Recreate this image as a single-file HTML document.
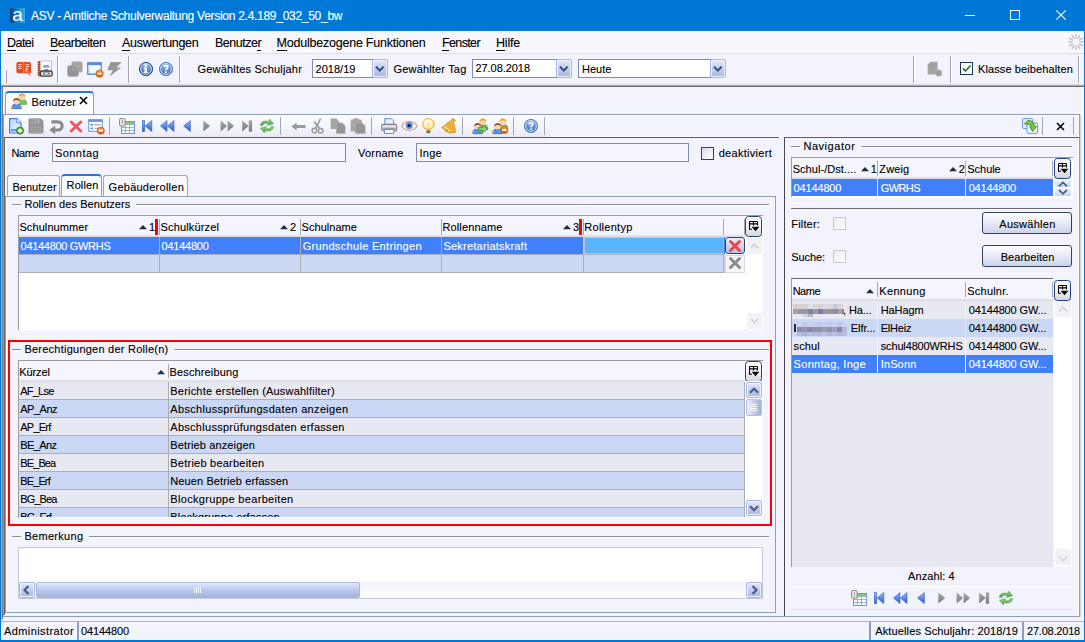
<!DOCTYPE html>
<html lang="de"><head><meta charset="utf-8"><title>ASV - Amtliche Schulverwaltung</title>
<style>
html,body{margin:0;padding:0}
body{width:1085px;height:642px;position:relative;overflow:hidden;background:#F2F3FD;font-family:"Liberation Sans",sans-serif;font-size:11px;color:#000;-webkit-text-stroke:0.12px #000}
.a{position:absolute;box-sizing:border-box}
.t{white-space:nowrap;line-height:16px;height:16px}
.w{color:#fff;-webkit-text-stroke:0.12px #fff}
.m{}
.m u{text-decoration:none;border-bottom:1px solid #000;padding-bottom:0}
.inp{background:#fff;border:1px solid #7A8DB5}
.ro{background:#F5F6FE}
.hs{background:linear-gradient(#F4F5FD,#D4D4DC)}
.btn{border:1px solid #33415F;border-radius:3px;background:linear-gradient(#FDFDFF 0%,#E9ECF8 45%,#CDD3EA 100%);text-align:center}
.dd{border:1px solid #A8B8DC;border-radius:2px;background:linear-gradient(#E4EAFC,#C4D0F4 45%,#A8B8E4);box-shadow:inset 0 0 0 1px #EEF2FF}
.cb{background:linear-gradient(135deg,#DCDCE4,#FFFFFF);border:1px solid #33415F}
.cbd{background:linear-gradient(135deg,#ECECF0,#FFFFFF);border:1px solid #C8C8D0}
.hdr{background:#F4F5FD}
svg{position:absolute;overflow:visible}
</style></head>
<body>
<div class="a" style="left:0px;top:0px;width:1085px;height:31px;background:#0078D7"></div>
<div class="a" style="left:10px;top:8px;width:15px;height:15px;background:linear-gradient(90deg,#0A3C78,#1C8DDC 60%,#3AA8E8)"></div>
<svg class="a" style="left:10px;top:8px" width="15" height="15"><text x="7.6" y="12.8" text-anchor="middle" font-size="19" fill="#fff" font-family="Liberation Sans, sans-serif" style="letter-spacing:0">a</text></svg>
<div class="a t w" style="left:31px;top:7.84px;font-size:12px;letter-spacing:-0.28px;">ASV - Amtliche Schulverwaltung Version 2.4.189_032_50_bw</div>
<div class="a" style="left:965px;top:15px;width:10px;height:1px;background:#fff"></div>
<div class="a" style="left:1010px;top:10px;width:10px;height:10px;border:1px solid #fff"></div>
<svg class="a" style="left:1056px;top:10px" width="10" height="10"><path d="M0.3 0.3L9.7 9.7M9.7 0.3L0.3 9.7" stroke="#fff" stroke-width="1.1" fill="none"/></svg>
<div class="a" style="left:0px;top:31px;width:1px;height:611px;background:#0078D7"></div>
<div class="a" style="left:1084px;top:31px;width:1px;height:611px;background:#0078D7"></div>
<div class="a" style="left:0px;top:640px;width:1085px;height:2px;background:#0078D7"></div>
<div class="a" style="left:1px;top:31px;width:1083px;height:22px;background:#F7F7FE"></div>
<div class="a t m" style="left:7px;top:34.67px;font-size:12.5px;letter-spacing:-0.54px;"><u>D</u>atei</div>
<div class="a t m" style="left:50px;top:34.67px;font-size:12.5px;letter-spacing:-0.50px;"><u>B</u>earbeiten</div>
<div class="a t m" style="left:122px;top:34.67px;font-size:12.5px;letter-spacing:-0.29px;"><u>A</u>uswertungen</div>
<div class="a t m" style="left:215px;top:34.67px;font-size:12.5px;letter-spacing:-0.50px;">Benutze<u>r</u></div>
<div class="a t m" style="left:276.5px;top:34.67px;font-size:12.5px;letter-spacing:-0.22px;"><u>M</u>odulbezogene Funktionen</div>
<div class="a t m" style="left:442px;top:34.67px;font-size:12.5px;letter-spacing:-0.63px;"><u>F</u>enster</div>
<div class="a t m" style="left:496px;top:34.67px;font-size:12.5px;letter-spacing:-0.20px;"><u>H</u>ilfe</div>
<div class="a" style="left:1px;top:53px;width:1083px;height:1px;background:#DCDCE8"></div>
<svg class="a" style="left:1067px;top:32.5px" width="18" height="18" viewBox="-9 -9 18 18"><line x1="0" y1="-3.5" x2="0" y2="-8" stroke="#C4C6CE" stroke-width="1.6" transform="rotate(0)"/><line x1="0" y1="-3.5" x2="0" y2="-8" stroke="#C4C6CE" stroke-width="1.6" transform="rotate(30)"/><line x1="0" y1="-3.5" x2="0" y2="-8" stroke="#C4C6CE" stroke-width="1.6" transform="rotate(60)"/><line x1="0" y1="-3.5" x2="0" y2="-8" stroke="#C4C6CE" stroke-width="1.6" transform="rotate(90)"/><line x1="0" y1="-3.5" x2="0" y2="-8" stroke="#C4C6CE" stroke-width="1.6" transform="rotate(120)"/><line x1="0" y1="-3.5" x2="0" y2="-8" stroke="#C4C6CE" stroke-width="1.6" transform="rotate(150)"/><line x1="0" y1="-3.5" x2="0" y2="-8" stroke="#C4C6CE" stroke-width="1.6" transform="rotate(180)"/><line x1="0" y1="-3.5" x2="0" y2="-8" stroke="#C4C6CE" stroke-width="1.6" transform="rotate(210)"/><line x1="0" y1="-3.5" x2="0" y2="-8" stroke="#C4C6CE" stroke-width="1.6" transform="rotate(240)"/><line x1="0" y1="-3.5" x2="0" y2="-8" stroke="#C4C6CE" stroke-width="1.6" transform="rotate(270)"/><line x1="0" y1="-3.5" x2="0" y2="-8" stroke="#C4C6CE" stroke-width="1.6" transform="rotate(300)"/><line x1="0" y1="-3.5" x2="0" y2="-8" stroke="#C4C6CE" stroke-width="1.6" transform="rotate(330)"/></svg>
<div class="a" style="left:1px;top:84px;width:1083px;height:1px;background:#DCDCE4"></div>
<div class="a" style="left:1px;top:85px;width:1083px;height:1px;background:#ACACB4"></div>
<div class="a" style="left:1px;top:86px;width:1083px;height:1px;background:#6E6E72"></div>
<div class="a" style="left:57px;top:56px;width:1px;height:27px;background:#A4A6B0"></div>
<div class="a" style="left:58px;top:56px;width:1px;height:27px;background:#FFFFFF"></div>
<div class="a" style="left:128px;top:56px;width:1px;height:27px;background:#A4A6B0"></div>
<div class="a" style="left:129px;top:56px;width:1px;height:27px;background:#FFFFFF"></div>
<div class="a" style="left:179px;top:56px;width:1px;height:27px;background:#A4A6B0"></div>
<div class="a" style="left:180px;top:56px;width:1px;height:27px;background:#FFFFFF"></div>
<div class="a" style="left:913px;top:56px;width:1px;height:27px;background:#A4A6B0"></div>
<div class="a" style="left:914px;top:56px;width:1px;height:27px;background:#FFFFFF"></div>
<div class="a" style="left:950px;top:56px;width:1px;height:27px;background:#A4A6B0"></div>
<div class="a" style="left:951px;top:56px;width:1px;height:27px;background:#FFFFFF"></div>
<div class="a" style="left:1078px;top:56px;width:1px;height:27px;background:#A4A6B0"></div>
<div class="a" style="left:1079px;top:56px;width:1px;height:27px;background:#FFFFFF"></div>
<div class="a" style="left:1px;top:69px;width:11px;height:1px;background:#FFFFFF"></div>
<div class="a" style="left:6px;top:70px;width:1px;height:13px;background:#A4A6B0"></div>
<div class="a t" style="left:197.5px;top:61.19px;letter-spacing:0.19px;">Gewähltes Schuljahr</div>
<div class="a inp" style="left:312px;top:59px;width:61px;height:19px;"></div>
<div class="a t" style="left:315.5px;top:61.19px;letter-spacing:0.03px;">2018/19</div>
<div class="a t" style="left:393.5px;top:61.19px;letter-spacing:0.17px;">Gewählter Tag</div>
<div class="a inp" style="left:472px;top:59px;width:85px;height:19px;"></div>
<div class="a t" style="left:475.5px;top:60.19px;letter-spacing:-0.06px;">27.08.2018</div>
<div class="a inp" style="left:578px;top:59px;width:133px;height:19px;"></div>
<div class="a t" style="left:582px;top:61.19px;letter-spacing:0.03px;">Heute</div>
<div class="a dd" style="left:372px;top:59px;width:16px;height:19px;"></div>
<svg class="a" style="left:374.5px;top:65px" width="10" height="8"><path d="M1 1.6L4.8 5.6L8.6 1.6" stroke="#3C4C6C" stroke-width="2.1" fill="none"/></svg>
<div class="a dd" style="left:556px;top:59px;width:16px;height:19px;"></div>
<svg class="a" style="left:558.5px;top:65px" width="10" height="8"><path d="M1 1.6L4.8 5.6L8.6 1.6" stroke="#3C4C6C" stroke-width="2.1" fill="none"/></svg>
<div class="a dd" style="left:710px;top:59px;width:16px;height:19px;"></div>
<svg class="a" style="left:712.5px;top:65px" width="10" height="8"><path d="M1 1.6L4.8 5.6L8.6 1.6" stroke="#3C4C6C" stroke-width="2.1" fill="none"/></svg>
<div class="a" style="left:960px;top:62px;width:13px;height:13px;background:#fff;border:1px solid #1C3460"></div>
<svg class="a" style="left:962px;top:64px" width="10" height="9"><path d="M1 4.5L3.5 7L8.5 1.5" stroke="#1E8A1E" stroke-width="1.8" fill="none"/></svg>
<div class="a t" style="left:978px;top:61.19px;letter-spacing:0.11px;">Klasse beibehalten</div>
<svg width="0" height="0" style="position:absolute"><defs><linearGradient id="gb" x1="0" y1="0" x2="0" y2="1"><stop offset="0" stop-color="#94BCF8"/><stop offset="1" stop-color="#2858CC"/></linearGradient><linearGradient id="gg" x1="0" y1="0" x2="0" y2="1"><stop offset="0" stop-color="#A8A8A8"/><stop offset="1" stop-color="#7C7C7C"/></linearGradient><radialGradient id="gi" cx="0.5" cy="0.3" r="0.7"><stop offset="0" stop-color="#8FB4E8"/><stop offset="1" stop-color="#2B5CA8"/></radialGradient><radialGradient id="gh" cx="0.5" cy="0.3" r="0.7"><stop offset="0" stop-color="#8CB4E8"/><stop offset="1" stop-color="#3C6CB4"/></radialGradient><linearGradient id="gn" x1="0" y1="0" x2="0" y2="1"><stop offset="0" stop-color="#98D088"/><stop offset="1" stop-color="#4CA444"/></linearGradient><linearGradient id="gp" x1="0" y1="0" x2="0" y2="1"><stop offset="0" stop-color="#FFFFFF"/><stop offset="1" stop-color="#BCD4F4"/></linearGradient><radialGradient id="gy" cx="0.45" cy="0.35" r="0.7"><stop offset="0" stop-color="#FFFFF4"/><stop offset="0.6" stop-color="#FFF0B0"/><stop offset="1" stop-color="#FCCC68"/></radialGradient><linearGradient id="go" x1="0" y1="0" x2="0" y2="1"><stop offset="0" stop-color="#FFA040"/><stop offset="1" stop-color="#D85400"/></linearGradient><linearGradient id="gd" x1="0" y1="0" x2="0.6" y2="1"><stop offset="0" stop-color="#C0D8FA"/><stop offset="1" stop-color="#E4EEFE"/></linearGradient></defs></svg>
<svg class="a" style="left:16px;top:61px" width="16" height="16"><path d="M0.4 2.6Q0.4 1 2 1H13.4Q15 1 15 2.6V12.2H13L15 15.2L10.6 12.2H2Q0.4 12.2 0.4 10.6Z" fill="#E84A1A"/><path d="M7.7 1.4V12" stroke="#F49070" stroke-width="0.8"/><path d="M2.2 3.6H5.8M2.2 5.6H5.8M2.2 7.6H5.8M9.6 3.6H13.2M9.6 5.6H13.2M9.6 7.6H12" stroke="#FBD4C4" stroke-width="1"/><path d="M9.8 8.8L14.6 14.4M9.8 8.8V11.4M9.8 8.8H12.2" stroke="#FBC0A8" stroke-width="0.9" fill="none"/></svg>
<svg class="a" style="left:37px;top:60px" width="16" height="17"><rect x="2.6" y="1" width="12" height="15" fill="#FDFDFF" stroke="#B4B4BC" stroke-width="0.8"/><rect x="1" y="1" width="2.2" height="15.4" fill="#D06C34"/><path d="M0.4 2.5H3.6M0.4 4.5H3.6M0.4 6.5H3.6M0.4 8.5H3.6M0.4 10.5H3.6M0.4 12.5H3.6M0.4 14.5H3.6" stroke="#7C3C1C" stroke-width="0.7"/><rect x="6.2" y="5.2" width="6" height="2.4" fill="#6C9CF0"/><rect x="7.4" y="9" width="3.6" height="2.4" fill="#6C9CF0"/><rect x="3.4" y="11" width="11.8" height="5.2" rx="1.8" fill="#E4E4E4" stroke="#3C3C3C" stroke-width="1.3"/><rect x="6" y="12.6" width="6.6" height="1.8" fill="#4C4C4C"/><rect x="7.4" y="13" width="3.8" height="1" fill="#E8E8E8"/></svg>
<svg class="a" style="left:67px;top:61px" width="16" height="16"><rect x="4.5" y="0.5" width="11" height="11" rx="2" fill="#A4A4A4"/><rect x="0.5" y="4.5" width="11" height="11" rx="2" fill="#969696" stroke="#ACACAC" stroke-width="0.6"/><path d="M5 9C7 7.5 8 8.5 7.5 10M7.5 5.5C9.5 4.5 11 6 10 7.5" stroke="#B8B8B8" stroke-width="0.9" fill="none"/></svg>
<svg class="a" style="left:87px;top:62px" width="17" height="16"><rect x="0.7" y="0.7" width="13.6" height="11.6" fill="url(#gp)" stroke="#5C8CDC" stroke-width="1.2"/><rect x="0.7" y="0.7" width="13.6" height="2.4" fill="#5C8CDC"/><rect x="2.5" y="4.5" width="10" height="6.4" fill="#FDFEFF" opacity="0.8"/><circle cx="12.6" cy="11.6" r="3.7" fill="url(#go)" stroke="#C04800" stroke-width="0.6"/><rect x="10.399999999999999" y="10.7" width="4.4" height="1.8" fill="#fff"/></svg>
<svg class="a" style="left:107px;top:61px" width="16" height="17"><path d="M3.6 1H14.7L9.4 6.6H14.2L2.6 15.4L5.8 9.2H0.3Z" fill="#969696"/></svg>
<svg class="a" style="left:138px;top:61px" width="16" height="16"><circle cx="8" cy="8" r="6.6" fill="url(#gi)" stroke="#1F4E98" stroke-width="1"/><circle cx="8" cy="8" r="5.4" fill="none" stroke="#EEF4FF" stroke-width="0.9" opacity="0.9"/><rect x="6.6" y="6.6" width="2.2" height="5" fill="#fff"/><rect x="5.8" y="6.6" width="2" height="1.2" fill="#fff"/><rect x="5.6" y="10.8" width="4.4" height="1.2" fill="#fff"/><circle cx="7.7" cy="4.4" r="1.3" fill="#fff"/></svg>
<svg class="a" style="left:158px;top:61px" width="16" height="16"><circle cx="8" cy="8" r="6.6" fill="url(#gh)" stroke="#4C84D0" stroke-width="1"/><circle cx="8" cy="8" r="5.4" fill="none" stroke="#EEF4FF" stroke-width="0.9" opacity="0.9"/><path d="M6.2 6.3C6.2 4.1 9.8 4.1 9.8 6.3C9.8 7.7 8 7.6 8 9.2" stroke="#fff" stroke-width="1.6" fill="none"/><circle cx="8" cy="11.3" r="1" fill="#fff"/></svg>
<svg class="a" style="left:927px;top:61px" width="16" height="16"><path d="M0.6 3.4L3.4 0.8H10.6V13.6H0.6Z" fill="#A6A6A6"/><path d="M2.6 4H8.4M2.6 6.4H8.4M2.6 8.8H6.4" stroke="#9A9A9A" stroke-width="1"/><circle cx="11.6" cy="12" r="3.2" fill="#9E9E9E" stroke="#B8B8B8" stroke-width="0.7"/></svg>
<div class="a" style="left:1px;top:87px;width:1px;height:533px;background:#B0ACAC"></div>
<div class="a" style="left:2px;top:87px;width:1px;height:532px;background:#78787C"></div>
<div class="a" style="left:3px;top:114px;width:1px;height:503px;background:#8E9EBA"></div>
<div class="a" style="left:4px;top:138px;width:1px;height:477px;background:#646466"></div>
<div class="a" style="left:6px;top:197px;width:1px;height:415px;background:#F9F9FF"></div>
<div class="a" style="left:1078px;top:115px;width:1px;height:501px;background:#FFFFFF"></div>
<div class="a" style="left:1080px;top:115px;width:1px;height:502px;background:#D4D4DE"></div>
<div class="a" style="left:1081px;top:115px;width:1px;height:502px;background:#ECECF8"></div>
<div class="a" style="left:1082px;top:87px;width:2px;height:534px;background:#FFFFFF"></div>
<div class="a" style="left:1079px;top:115px;width:1px;height:502px;background:#8E9EBA"></div>
<div class="a" style="left:3px;top:616px;width:1077px;height:1px;background:#8E9EBA"></div>
<div class="a" style="left:1px;top:621px;width:1083px;height:1px;background:#A8B4D4"></div>
<div class="a" style="left:5px;top:91px;width:89px;height:24px;background:#FDFDFF;border:1px solid #8E9EBA;border-bottom:none;border-top:2px solid #2F6FE0;border-radius:4px 4px 0 0"></div>
<div class="a t" style="left:31.5px;top:94.19px;letter-spacing:0.06px;">Benutzer</div>
<svg class="a" style="left:79px;top:96px" width="9" height="9"><path d="M1 1L8 8M8 1L1 8" stroke="#000" stroke-width="1.6" fill="none"/></svg>
<div class="a" style="left:3px;top:114px;width:1077px;height:1px;background:#8E9EBA"></div>
<div class="a" style="left:5px;top:115px;width:545px;height:22px;background:linear-gradient(#FFFFFF 0,#FAFAFF 2px,#F2F3FD 60%,#EAE8F4 100%)"></div>
<div class="a" style="left:550px;top:115px;width:528px;height:1px;background:#FAFAFF"></div>
<div class="a" style="left:550px;top:136px;width:528px;height:1px;background:#FCFCFF"></div>
<div class="a" style="left:4px;top:137px;width:775px;height:1px;background:#5C5C60"></div>
<div class="a" style="left:784px;top:137px;width:295px;height:1px;background:#5C5C60"></div>
<div class="a" style="left:109px;top:117px;width:1px;height:18px;background:#A4A6B0"></div>
<div class="a" style="left:280px;top:117px;width:1px;height:18px;background:#A4A6B0"></div>
<div class="a" style="left:371px;top:117px;width:1px;height:18px;background:#A4A6B0"></div>
<div class="a" style="left:462px;top:117px;width:1px;height:18px;background:#A4A6B0"></div>
<div class="a" style="left:513px;top:117px;width:1px;height:18px;background:#A4A6B0"></div>
<div class="a" style="left:1042px;top:117px;width:1px;height:18px;background:#A4A6B0"></div>
<div class="a" style="left:1073px;top:117px;width:1px;height:18px;background:#A4A6B0"></div>
<div class="a" style="left:544px;top:117px;width:1px;height:18px;background:#A4A6B0"></div>
<svg class="a" style="left:1056px;top:121.5px" width="9" height="9"><path d="M1 1L8 8M8 1L1 8" stroke="#000" stroke-width="1.6" fill="none"/></svg>
<svg class="a" style="left:11px;top:93px" width="16" height="16"><path d="M6.1000000000000005 11.3C5.9 7.3 8.3 6.3 10.9 6.3C13.5 6.3 15.9 7.3 15.7 11.3Z" fill="#78C068" stroke="#4C9C40" stroke-width="0.7"/><circle cx="10.9" cy="3.9" r="3.3" fill="#F8D4A8"/><path d="M7.4 4.3C6.9 -0.6999999999999997 14.9 -0.6999999999999997 14.4 4.3C13.3 1.9 8.5 1.9 7.4 4.3Z" fill="#E0A838"/><path d="M0.7999999999999998 15.700000000000001C0.5999999999999996 11.700000000000001 2.9999999999999996 10.700000000000001 5.6 10.700000000000001C8.2 10.700000000000001 10.6 11.700000000000001 10.399999999999999 15.700000000000001Z" fill="#4C94F0" stroke="#2C64C8" stroke-width="0.7"/><circle cx="1.0" cy="13.9" r="1.1" fill="#F0A040"/><circle cx="10.2" cy="13.9" r="1.1" fill="#F0A040"/><circle cx="5.6" cy="8.3" r="3.3" fill="#F8D4A8"/><path d="M2.0999999999999996 8.700000000000001C1.5999999999999996 3.700000000000001 9.6 3.700000000000001 9.1 8.700000000000001C8.0 6.300000000000001 3.1999999999999997 6.300000000000001 2.0999999999999996 8.700000000000001Z" fill="#8C5434"/></svg>
<svg class="a" style="left:8px;top:118px" width="16" height="17"><path d="M1.6 0.6H8.8L13 4.8V15H1.6Z" fill="url(#gd)" stroke="#4480DC" stroke-width="1.2"/><path d="M8.8 0.6V4.8H13" fill="#F0F6FF" stroke="#4480DC" stroke-width="0.9"/><rect x="2.6" y="11" width="7" height="2.4" fill="#5CA0F4"/><circle cx="12" cy="12.6" r="3.7" fill="#4CA838" stroke="#2C7C24" stroke-width="0.6"/><path d="M12 10.4V14.8M9.8 12.6H14.2" stroke="#fff" stroke-width="1.6"/></svg>
<svg class="a" style="left:28px;top:118px" width="16" height="16"><path d="M0.5 1.5Q0.5 0.5 1.5 0.5H13L15.5 3V14.5Q15.5 15.5 14.5 15.5H1.5Q0.5 15.5 0.5 14.5Z" fill="#959595"/><rect x="3.4" y="0.5" width="8.6" height="5.4" fill="#A6A6A6"/><rect x="5" y="1.5" width="1.2" height="3.2" fill="#888"/><rect x="3" y="8.5" width="10" height="7" fill="#A2A2A2"/><path d="M4.5 10.8H11.5M4.5 13H11.5" stroke="#8E8E8E" stroke-width="0.9"/></svg>
<svg class="a" style="left:49px;top:120px" width="15" height="13"><path d="M2.4 1.8H9A4.1 4.1 0 0 1 9 10H5.4" stroke="#8A8A8A" stroke-width="3.2" fill="none"/><path d="M0.2 10L6.2 5.6V14.2Z" fill="#8A8A8A"/></svg>
<svg class="a" style="left:69px;top:120px" width="14" height="13"><path d="M2.2 2L11.8 11M11.8 2L2.2 11" stroke="#F0545C" stroke-width="2.9" stroke-linecap="round" fill="none"/></svg>
<svg class="a" style="left:88px;top:119px" width="17" height="16"><rect x="0.7" y="0.7" width="13.6" height="11.6" fill="#FDFEFF" stroke="#7C9CD4" stroke-width="1.1"/><rect x="0.7" y="0.7" width="13.6" height="2.2" fill="#6C94DC"/><rect x="2.4" y="5" width="2.6" height="1.6" fill="#5C8CDC"/><rect x="2.4" y="8.6" width="2.6" height="1.6" fill="#5C8CDC"/><path d="M6.4 5.8H12.4M6.4 9.4H10" stroke="#B4B4B4" stroke-width="1.4"/><circle cx="12.8" cy="11.6" r="3.6" fill="url(#go)" stroke="#C04800" stroke-width="0.6"/><rect x="10.600000000000001" y="10.7" width="4.4" height="1.8" fill="#fff"/></svg>
<svg class="a" style="left:119px;top:118px" width="16" height="16"><rect x="2.5" y="3.5" width="13" height="12" fill="#fff" stroke="#6C94DC" stroke-width="1"/><path d="M2.5 6.5H15.5M2.5 9.5H15.5M2.5 12.5H15.5M6.5 3.5V15.5M10.5 6.5V15.5" stroke="#88ACE4" stroke-width="0.9" fill="none"/><rect x="6.8" y="4" width="8.4" height="2.2" fill="#8CC46C"/><rect x="0.5" y="0.5" width="5.6" height="7.6" rx="1.4" fill="#E4E4E4" stroke="#8C8C8C" stroke-width="1"/><path d="M3.3 2V6.4" stroke="#A4A4A4" stroke-width="1"/></svg>
<svg class="a" style="left:142px;top:120.3px" width="11" height="12"><rect x="0.3" y="0.3" width="2.4" height="11.4" fill="url(#gb)" stroke="#2C5CC8" stroke-width="0.5"/><path d="M9.8 0.5V11.5L3.2 6Z" fill="url(#gb)" stroke="#2C5CC8" stroke-width="0.6"/></svg>
<svg class="a" style="left:160px;top:120.3px" width="15" height="12"><path d="M7 0.5V11.5L0.5 6Z" fill="url(#gb)" stroke="#2C5CC8" stroke-width="0.6"/><path d="M14 0.5V11.5L7.5 6Z" fill="url(#gb)" stroke="#2C5CC8" stroke-width="0.6"/></svg>
<svg class="a" style="left:182.5px;top:120.3px" width="9" height="12"><path d="M7.4 0.5V11.5L0.6 6Z" fill="url(#gb)" stroke="#2C5CC8" stroke-width="0.6"/></svg>
<svg class="a" style="left:202.8px;top:120.3px" width="9" height="12"><path d="M0.4 0.5V11.5L7.2 6Z" fill="url(#gg)"/></svg>
<svg class="a" style="left:220px;top:120.3px" width="15" height="12"><path d="M0.6 0.5V11.5L7.1 6Z" fill="url(#gg)"/><path d="M7.6 0.5V11.5L14.1 6Z" fill="url(#gg)"/></svg>
<svg class="a" style="left:241.8px;top:120.3px" width="11" height="12"><path d="M0.2 0.5V11.5L6.8 6Z" fill="url(#gg)"/><rect x="6.8" y="0.3" width="3.3" height="11.4" fill="url(#gg)"/></svg>
<svg class="a" style="left:259px;top:118px" width="16" height="16"><path d="M1.2 7.2C1.6 3.6 6 2 9.6 3.6L10.6 1L14.6 5.8L8.6 7.4L9.2 5.6C6.6 4.8 4.4 5.6 3.8 7.6Z" fill="url(#gn)" stroke="#4C9C44" stroke-width="0.5"/><path d="M14.8 8.8C14.4 12.4 10 14 6.4 12.4L5.4 15L1.4 10.2L7.4 8.6L6.8 10.4C9.4 11.2 11.6 10.4 12.2 8.4Z" fill="url(#gn)" stroke="#4C9C44" stroke-width="0.5"/></svg>
<svg class="a" style="left:291px;top:122px" width="15" height="9"><path d="M0.4 4.5L5.6 0.4V3H14.4V6H5.6V8.6Z" fill="#9A9A9A"/></svg>
<svg class="a" style="left:311px;top:118px" width="13" height="17"><path d="M9.6 0.6L4.6 10.4M3.2 3.4L8.6 10.4" stroke="#9A9A9A" stroke-width="1.7" fill="none"/><circle cx="3.4" cy="12.6" r="2.3" fill="none" stroke="#9A9A9A" stroke-width="1.5"/><circle cx="9.6" cy="12.8" r="2.3" fill="none" stroke="#9A9A9A" stroke-width="1.5"/></svg>
<svg class="a" style="left:330px;top:118px" width="16" height="16"><path d="M0.6 0.6H6.4L9.2 3.4V11H0.6Z" fill="#A6A6A6"/><path d="M6.4 5H12.2L15.2 8V15.6H6.4Z" fill="#949494" stroke="#B4B4B4" stroke-width="0.6"/></svg>
<svg class="a" style="left:350px;top:118px" width="16" height="16"><path d="M0.6 2.6Q0.6 1.4 1.8 1.4H3.2Q4 0.2 5.4 0.2H7Q8.4 0.2 9.2 1.4H10.6Q11.8 1.4 11.8 2.6V13.6H0.6Z" fill="#A6A6A6"/><path d="M5.4 5H12.2L15.2 8V15.6H5.4Z" fill="#949494" stroke="#B4B4B4" stroke-width="0.6"/></svg>
<svg class="a" style="left:381px;top:118px" width="17" height="17"><path d="M3.8 0.7H10.4L12.8 3.2V7.6H3.8Z" fill="#E8F0FC" stroke="#5C8CDC" stroke-width="1"/><rect x="0.7" y="6.4" width="15" height="6.6" rx="1.8" fill="#E4E4E8" stroke="#7C7C84" stroke-width="1.1"/><rect x="2" y="9.6" width="12.4" height="2.4" fill="#9C9CA4"/><path d="M3.6 11.4H12.8V15.4H3.6Z" fill="#fff" stroke="#5C8CDC" stroke-width="1"/></svg>
<svg class="a" style="left:401px;top:120px" width="17" height="12"><path d="M0.6 6C3.6 0.2 12.8 0.2 16.2 6C12.8 11.8 3.6 11.8 0.6 6Z" fill="#FBF4F0" stroke="#DC9C84" stroke-width="1.1"/><circle cx="8.2" cy="5.6" r="3.5" fill="#5C8CE4"/><circle cx="8.2" cy="5.4" r="1.5" fill="#102040"/></svg>
<svg class="a" style="left:421px;top:118px" width="15" height="16"><circle cx="7.4" cy="6.2" r="5.7" fill="url(#gy)" stroke="#ECA83C" stroke-width="1"/><path d="M5.6 5L7.4 7.4L9.2 5M7.4 7.4V10.6" stroke="#F8C860" stroke-width="0.9" fill="none"/><rect x="5.2" y="10.6" width="4.4" height="2" fill="#F8B43C"/><rect x="5.4" y="12.6" width="4" height="2.6" rx="0.8" fill="#6C6C6C"/></svg>
<svg class="a" style="left:441px;top:118px" width="16" height="16"><path d="M11.6 0.4L14.6 2.2L12.4 4.4C14 8 14 11 14.4 14.4L8.4 15L0.6 9.4C3.4 8.4 5.4 4.4 10 3Z" fill="#ECB03C" stroke="#C88814" stroke-width="0.7"/><path d="M3.6 9.2L8.8 12.8" stroke="#FBE4A0" stroke-width="1.6"/><circle cx="5.6" cy="12.8" r="1.7" fill="#D89C24"/></svg>
<svg class="a" style="left:472px;top:118px" width="16" height="16"><path d="M6.1000000000000005 11.3C5.9 7.3 8.3 6.3 10.9 6.3C13.5 6.3 15.9 7.3 15.7 11.3Z" fill="#78C068" stroke="#4C9C40" stroke-width="0.7"/><circle cx="10.9" cy="3.9" r="3.3" fill="#F8D4A8"/><path d="M7.4 4.3C6.9 -0.6999999999999997 14.9 -0.6999999999999997 14.4 4.3C13.3 1.9 8.5 1.9 7.4 4.3Z" fill="#E0A838"/><path d="M0.7999999999999998 15.700000000000001C0.5999999999999996 11.700000000000001 2.9999999999999996 10.700000000000001 5.6 10.700000000000001C8.2 10.700000000000001 10.6 11.700000000000001 10.399999999999999 15.700000000000001Z" fill="#4C94F0" stroke="#2C64C8" stroke-width="0.7"/><circle cx="1.0" cy="13.9" r="1.1" fill="#F0A040"/><circle cx="10.2" cy="13.9" r="1.1" fill="#F0A040"/><circle cx="5.6" cy="8.3" r="3.3" fill="#F8D4A8"/><path d="M2.0999999999999996 8.700000000000001C1.5999999999999996 3.700000000000001 9.6 3.700000000000001 9.1 8.700000000000001C8.0 6.300000000000001 3.1999999999999997 6.300000000000001 2.0999999999999996 8.700000000000001Z" fill="#8C5434"/><path d="M6.4 9.6H10.4V7.2L15.6 11L10.4 14.8V12.4H6.4Z" fill="#90D078" stroke="#3C8C30" stroke-width="0.9"/></svg>
<svg class="a" style="left:492px;top:118px" width="16" height="16"><path d="M6.1000000000000005 11.3C5.9 7.3 8.3 6.3 10.9 6.3C13.5 6.3 15.9 7.3 15.7 11.3Z" fill="#78C068" stroke="#4C9C40" stroke-width="0.7"/><circle cx="10.9" cy="3.9" r="3.3" fill="#F8D4A8"/><path d="M7.4 4.3C6.9 -0.6999999999999997 14.9 -0.6999999999999997 14.4 4.3C13.3 1.9 8.5 1.9 7.4 4.3Z" fill="#E0A838"/><path d="M0.7999999999999998 15.700000000000001C0.5999999999999996 11.700000000000001 2.9999999999999996 10.700000000000001 5.6 10.700000000000001C8.2 10.700000000000001 10.6 11.700000000000001 10.399999999999999 15.700000000000001Z" fill="#4C94F0" stroke="#2C64C8" stroke-width="0.7"/><circle cx="1.0" cy="13.9" r="1.1" fill="#F0A040"/><circle cx="10.2" cy="13.9" r="1.1" fill="#F0A040"/><circle cx="5.6" cy="8.3" r="3.3" fill="#F8D4A8"/><path d="M2.0999999999999996 8.700000000000001C1.5999999999999996 3.700000000000001 9.6 3.700000000000001 9.1 8.700000000000001C8.0 6.300000000000001 3.1999999999999997 6.300000000000001 2.0999999999999996 8.700000000000001Z" fill="#8C5434"/><circle cx="12.4" cy="12" r="3.5" fill="url(#go)" stroke="#C04800" stroke-width="0.6"/><rect x="10.2" y="11.1" width="4.4" height="1.8" fill="#fff"/></svg>
<svg class="a" style="left:523px;top:118px" width="16" height="16"><circle cx="8" cy="8" r="6.6" fill="url(#gh)" stroke="#4C84D0" stroke-width="1"/><circle cx="8" cy="8" r="5.4" fill="none" stroke="#EEF4FF" stroke-width="0.9" opacity="0.9"/><path d="M6.2 6.3C6.2 4.1 9.8 4.1 9.8 6.3C9.8 7.7 8 7.6 8 9.2" stroke="#fff" stroke-width="1.6" fill="none"/><circle cx="8" cy="11.3" r="1" fill="#fff"/></svg>
<svg class="a" style="left:1021.5px;top:118px" width="16" height="16"><rect x="0.6" y="0.6" width="10" height="10" rx="1" fill="#E4EEFC" stroke="#6C94DC" stroke-width="1"/><rect x="5" y="5" width="10.4" height="10.4" rx="1" fill="#F4F8FF" stroke="#6C94DC" stroke-width="1"/><path d="M2.4 5.8L6 2.4C9.6 2.4 12.4 4.4 12.4 8.4L14.4 8.6L10.6 13.6L7.6 8.2L9.6 8.4C9.4 6.8 8 6 6.4 6.6Z" fill="#7CC83C" stroke="#2C7C1C" stroke-width="0.8"/></svg>
<div class="a t" style="left:11.5px;top:145.19px;letter-spacing:-0.39px;">Name</div>
<div class="a inp ro" style="left:52px;top:143px;width:294px;height:19px;"></div>
<div class="a t" style="left:55px;top:145.19px;letter-spacing:0.43px;">Sonntag</div>
<div class="a t" style="left:358px;top:145.19px;letter-spacing:0.22px;">Vorname</div>
<div class="a inp ro" style="left:416px;top:143px;width:273px;height:19px;"></div>
<div class="a t" style="left:419.4px;top:145.19px;letter-spacing:0.29px;">Inge</div>
<div class="a cb" style="left:701px;top:147px;width:13px;height:13px;"></div>
<div class="a t" style="left:718.7px;top:145.19px;letter-spacing:0.29px;">deaktiviert</div>
<div class="a" style="left:7px;top:175px;width:53px;height:22px;background:#F8F8FF;border:1px solid #9AA8C4;border-bottom:none;border-radius:3px 3px 0 0"></div>
<div class="a t" style="left:12.4px;top:179.19px;letter-spacing:0.02px;">Benutzer</div>
<div class="a" style="left:103px;top:175px;width:85px;height:22px;background:#F8F8FF;border:1px solid #9AA8C4;border-bottom:none;border-radius:3px 3px 0 0"></div>
<div class="a t" style="left:108.6px;top:179.19px;letter-spacing:0.25px;">Gebäuderollen</div>
<div class="a" style="left:5px;top:196px;width:771px;height:1px;background:#8E9EBA"></div>
<div class="a" style="left:5px;top:196px;width:1px;height:417px;background:#8E9EBA"></div>
<div class="a" style="left:61px;top:174px;width:41px;height:22px;background:#FDFDFF;border:1px solid #8E9EBA;border-bottom:none;border-top:2px solid #2F6FE0;border-radius:4px 4px 0 0"></div>
<div class="a t" style="left:66.6px;top:177.19px;letter-spacing:0.10px;">Rollen</div>
<div class="a" style="left:12px;top:204px;width:9px;height:1px;background:#8C8C94"></div>
<div class="a" style="left:12px;top:205px;width:9px;height:1px;background:#FFFFFF"></div>
<div class="a" style="left:136px;top:204px;width:633px;height:1px;background:#8C8C94"></div>
<div class="a" style="left:136px;top:205px;width:633px;height:1px;background:#FFFFFF"></div>
<div class="a t" style="left:24.4px;top:196.19px;letter-spacing:0.07px;">Rollen des Benutzers</div>
<div class="a" style="left:18px;top:215px;width:745px;height:115px;background:#fff;border-top:1px solid #9C9CA4;border-left:1px solid #9C9CA4"></div>
<div class="a hdr" style="left:19px;top:216px;width:726px;height:21px;"></div>
<div class="a hs" style="left:19px;top:234px;width:726px;height:3px;"></div>
<div class="a t" style="left:19.4px;top:219.19px;letter-spacing:0.10px;">Schulnummer</div>
<div class="a t" style="left:160.5px;top:219.19px;letter-spacing:0.15px;">Schulkürzel</div>
<div class="a t" style="left:301.6px;top:219.19px;letter-spacing:0.03px;">Schulname</div>
<div class="a t" style="left:442.4px;top:219.19px;letter-spacing:0.14px;">Rollenname</div>
<div class="a t" style="left:584.3px;top:219.19px;letter-spacing:0.27px;">Rollentyp</div>
<div class="a" style="left:159px;top:219px;width:1px;height:16px;background:#A8A8B0"></div>
<div class="a" style="left:300px;top:219px;width:1px;height:16px;background:#A8A8B0"></div>
<div class="a" style="left:441px;top:219px;width:1px;height:16px;background:#A8A8B0"></div>
<div class="a" style="left:583px;top:219px;width:1px;height:16px;background:#A8A8B0"></div>
<div class="a" style="left:723px;top:219px;width:1px;height:16px;background:#A8A8B0"></div>
<div class="a" style="left:744px;top:219px;width:1px;height:16px;background:#A8A8B0"></div>
<svg class="a" style="left:139px;top:225px" width="8" height="4"><path d="M0 4.2L4 0L8 4.2Z" fill="#1C2C44"/></svg>
<div class="a t" style="left:149px;top:219.19px;letter-spacing:-0.90px;">1</div>
<svg class="a" style="left:280px;top:225px" width="8" height="4"><path d="M0 4.2L4 0L8 4.2Z" fill="#1C2C44"/></svg>
<div class="a t" style="left:290px;top:219.19px;letter-spacing:-0.90px;">2</div>
<svg class="a" style="left:563px;top:225px" width="8" height="4"><path d="M0 4.2L4 0L8 4.2Z" fill="#1C2C44"/></svg>
<div class="a t" style="left:573px;top:219.19px;letter-spacing:-0.90px;">3</div>
<div class="a" style="left:155px;top:219px;width:3px;height:16px;background:#FA0000"></div>
<div class="a" style="left:579px;top:219px;width:3px;height:16px;background:#FA0000"></div>
<div class="a" style="left:745px;top:216px;width:17px;height:21px;border:1.5px solid #1C4080;border-radius:3.5px;background:linear-gradient(#FFFFFF 0%,#F6F6FA 45%,#D4D4DC 100%)"></div>
<svg class="a" style="left:745px;top:216px" width="17" height="21"><path d="M4.5 5.5H12.5M4.5 7.9H12.5M4.5 5.5V13.3H7M8.5 5.5V9.6M12.5 5.5V9.6" stroke="#000" stroke-width="1.1" fill="none"/><path d="M6.6 10.8H14.4L10.5 15.2Z" fill="#000"/></svg>
<div class="a" style="left:19px;top:237px;width:706px;height:17px;background:#4080FA"></div>
<div class="a" style="left:584px;top:237px;width:140px;height:17px;background:#C8C4C8"></div>
<div class="a" style="left:585px;top:238px;width:138px;height:15px;background:#5CB4FC"></div>
<div class="a" style="left:19px;top:255px;width:706px;height:17px;background:#CAD8F6"></div>
<div class="a" style="left:19px;top:254px;width:706px;height:1px;background:#AEAEB2"></div>
<div class="a" style="left:19px;top:272px;width:726px;height:1px;background:#AEAEB2"></div>
<div class="a" style="left:159px;top:237px;width:1px;height:36px;background:#AEAEB2"></div>
<div class="a" style="left:300px;top:237px;width:1px;height:36px;background:#AEAEB2"></div>
<div class="a" style="left:441px;top:237px;width:1px;height:36px;background:#AEAEB2"></div>
<div class="a" style="left:583px;top:237px;width:1px;height:36px;background:#AEAEB2"></div>
<div class="a" style="left:723px;top:237px;width:1px;height:36px;background:#AEAEB2"></div>
<div class="a" style="left:583px;top:237px;width:1px;height:17px;background:#C8C4C8"></div>
<div class="a t w" style="left:20.6px;top:238.19px;letter-spacing:-0.31px;">04144800 GWRHS</div>
<div class="a t w" style="left:161.6px;top:238.19px;letter-spacing:-0.24px;">04144800</div>
<div class="a t w" style="left:302.7px;top:238.19px;letter-spacing:0.32px;">Grundschule Entringen</div>
<div class="a t w" style="left:443.5px;top:238.19px;letter-spacing:0.21px;">Sekretariatskraft</div>
<div class="a" style="left:725px;top:237px;width:20px;height:17px;border:1px solid #33415F;border-radius:3px;background:linear-gradient(#E8EDFB,#B4C2EA)"></div>
<svg class="a" style="left:729px;top:239.5px" width="12" height="12"><path d="M1.5 1.5L10.5 10.5M10.5 1.5L1.5 10.5" stroke="#F0444C" stroke-width="3" stroke-linecap="round" fill="none"/></svg>
<div class="a" style="left:725px;top:255px;width:20px;height:18px;background:#F4F4FA;border:1px solid #D8D8E0"></div>
<svg class="a" style="left:729px;top:257px" width="12" height="12"><path d="M1.5 1.5L10.5 10.5M10.5 1.5L1.5 10.5" stroke="#8C8C8C" stroke-width="3" stroke-linecap="round" fill="none"/></svg>
<div class="a" style="left:747px;top:238px;width:15px;height:16px;background:#F2F2F6"></div>
<svg class="a" style="left:750px;top:243px" width="9" height="6"><path d="M1 5L4.5 1.5L8 5" stroke="#D0D0D6" stroke-width="1.6" fill="none"/></svg>
<div class="a" style="left:747px;top:313px;width:15px;height:16px;background:#F2F2F6"></div>
<svg class="a" style="left:750px;top:318px" width="9" height="6"><path d="M1 1L4.5 4.5L8 1" stroke="#D0D0D6" stroke-width="1.6" fill="none"/></svg>
<div class="a" style="left:8px;top:340px;width:764px;height:186px;border:2px solid #FA0000"></div>
<div class="a" style="left:12px;top:349px;width:9px;height:1px;background:#8C8C94"></div>
<div class="a" style="left:12px;top:350px;width:9px;height:1px;background:#FFFFFF"></div>
<div class="a" style="left:174px;top:349px;width:595px;height:1px;background:#8C8C94"></div>
<div class="a" style="left:174px;top:350px;width:595px;height:1px;background:#FFFFFF"></div>
<div class="a t" style="left:24.4px;top:341.19px;letter-spacing:0.24px;">Berechtigungen der Rolle(n)</div>
<div class="a" style="left:18px;top:360px;width:745px;height:158px;background:#fff;border-top:1px solid #9C9CA4;border-left:1px solid #9C9CA4"></div>
<div class="a hdr" style="left:19px;top:361px;width:726px;height:20px;"></div>
<div class="a t" style="left:19.2px;top:364.19px;letter-spacing:-0.10px;">Kürzel</div>
<div class="a t" style="left:169.6px;top:364.19px;letter-spacing:0.13px;">Beschreibung</div>
<svg class="a" style="left:156.5px;top:370px" width="8" height="4"><path d="M0 4.2L4 0L8 4.2Z" fill="#1C2C44"/></svg>
<div class="a" style="left:168px;top:364px;width:1px;height:14px;background:#A8A8B0"></div>
<div class="a" style="left:745px;top:361px;width:17px;height:21px;border:1.5px solid #1C4080;border-radius:3.5px;background:linear-gradient(#FFFFFF 0%,#F6F6FA 45%,#D4D4DC 100%)"></div>
<svg class="a" style="left:745px;top:361px" width="17" height="21"><path d="M4.5 5.5H12.5M4.5 7.9H12.5M4.5 5.5V13.3H7M8.5 5.5V9.6M12.5 5.5V9.6" stroke="#000" stroke-width="1.1" fill="none"/><path d="M6.6 10.8H14.4L10.5 15.2Z" fill="#000"/></svg>
<div class="a" style="left:19px;top:382px;width:726px;height:135px;overflow:hidden">
<div class="a" style="left:0px;top:0px;width:726px;height:18px;background:#E8E8F2;border-bottom:1px solid #AEAEB2"></div>
<div class="a t" style="left:1.3px;top:1.19px;letter-spacing:-0.79px;">AF_Lse</div>
<div class="a t" style="left:151.3px;top:1.19px;letter-spacing:0.20px;">Berichte erstellen (Auswahlfilter)</div>
<div class="a" style="left:0px;top:18px;width:726px;height:18px;background:#CAD8F6;border-bottom:1px solid #AEAEB2"></div>
<div class="a t" style="left:1.3px;top:19.19px;letter-spacing:-0.51px;">AP_Anz</div>
<div class="a t" style="left:151.3px;top:19.19px;letter-spacing:0.32px;">Abschlussprüfungsdaten anzeigen</div>
<div class="a" style="left:0px;top:36px;width:726px;height:18px;background:#E8E8F2;border-bottom:1px solid #AEAEB2"></div>
<div class="a t" style="left:1.3px;top:37.19px;letter-spacing:-0.78px;">AP_Erf</div>
<div class="a t" style="left:151.3px;top:37.19px;letter-spacing:0.28px;">Abschlussprüfungsdaten erfassen</div>
<div class="a" style="left:0px;top:54px;width:726px;height:18px;background:#CAD8F6;border-bottom:1px solid #AEAEB2"></div>
<div class="a t" style="left:1.3px;top:55.19px;letter-spacing:-0.61px;">BE_Anz</div>
<div class="a t" style="left:151.3px;top:55.19px;letter-spacing:0.13px;">Betrieb anzeigen</div>
<div class="a" style="left:0px;top:72px;width:726px;height:18px;background:#E8E8F2;border-bottom:1px solid #AEAEB2"></div>
<div class="a t" style="left:1.3px;top:73.19px;letter-spacing:-0.90px;">BE_Bea</div>
<div class="a t" style="left:151.3px;top:73.19px;letter-spacing:0.23px;">Betrieb bearbeiten</div>
<div class="a" style="left:0px;top:90px;width:726px;height:18px;background:#CAD8F6;border-bottom:1px solid #AEAEB2"></div>
<div class="a t" style="left:1.3px;top:91.19px;letter-spacing:-0.89px;">BE_Erf</div>
<div class="a t" style="left:151.3px;top:91.19px;letter-spacing:0.11px;">Neuen Betrieb erfassen</div>
<div class="a" style="left:0px;top:108px;width:726px;height:18px;background:#E8E8F2;border-bottom:1px solid #AEAEB2"></div>
<div class="a t" style="left:1.3px;top:109.19px;letter-spacing:-0.90px;">BG_Bea</div>
<div class="a t" style="left:151.3px;top:109.19px;letter-spacing:0.32px;">Blockgruppe bearbeiten</div>
<div class="a" style="left:0px;top:126px;width:726px;height:18px;background:#CAD8F6;border-bottom:1px solid #AEAEB2"></div>
<div class="a t" style="left:1.3px;top:127.19px;letter-spacing:-0.90px;">BG_Erf</div>
<div class="a t" style="left:151.3px;top:127.19px;letter-spacing:0.16px;">Blockgruppe erfassen</div>
<div class="a" style="left:149px;top:0px;width:1px;height:140px;background:#AEAEB2"></div>
</div>
<div class="a hs" style="left:19px;top:379px;width:726px;height:3px;"></div>
<div class="a" style="left:746px;top:381px;width:16px;height:136px;background:#fff"></div>
<div class="a dd" style="left:746px;top:382px;width:16px;height:16px;"></div>
<svg class="a" style="left:749px;top:387px" width="10" height="7"><path d="M1 5.8L5 1.8L9 5.8" stroke="#4C5C80" stroke-width="2.2" fill="none"/></svg>
<div class="a" style="left:746px;top:399px;width:16px;height:17px;border:1px solid #B4C0E0;border-radius:2px;background:linear-gradient(90deg,#E8EEFE,#C0CCF0 50%,#A4B2DE)"></div>
<div class="a" style="left:750px;top:404px;width:7px;height:1px;background:#FFFFFF"></div>
<div class="a" style="left:750px;top:406px;width:7px;height:1px;background:#FFFFFF"></div>
<div class="a" style="left:750px;top:408px;width:7px;height:1px;background:#FFFFFF"></div>
<div class="a" style="left:750px;top:410px;width:7px;height:1px;background:#FFFFFF"></div>
<div class="a" style="left:744px;top:382px;width:1px;height:135px;background:#AEAEB2"></div>
<div class="a dd" style="left:746px;top:500px;width:16px;height:16px;"></div>
<svg class="a" style="left:749px;top:505px" width="10" height="7"><path d="M1 1.2L5 5.2L9 1.2" stroke="#4C5C80" stroke-width="2.2" fill="none"/></svg>
<div class="a" style="left:12px;top:536px;width:9px;height:1px;background:#8C8C94"></div>
<div class="a" style="left:12px;top:537px;width:9px;height:1px;background:#FFFFFF"></div>
<div class="a" style="left:89px;top:536px;width:680px;height:1px;background:#8C8C94"></div>
<div class="a" style="left:89px;top:537px;width:680px;height:1px;background:#FFFFFF"></div>
<div class="a t" style="left:24.4px;top:528.19px;letter-spacing:0.30px;">Bemerkung</div>
<div class="a" style="left:18px;top:547px;width:745px;height:52px;background:#fff;border:1px solid #C4C8D8"></div>
<div class="a" style="left:19px;top:582px;width:743px;height:16px;background:linear-gradient(#F2F3FA,#FFFFFF)"></div>
<div class="a dd" style="left:19px;top:582px;width:16px;height:16px;"></div>
<svg class="a" style="left:23px;top:585px" width="7" height="10"><path d="M5.5 1L1.5 5L5.5 9" stroke="#4C5C80" stroke-width="2.2" fill="none"/></svg>
<div class="a" style="left:36px;top:582px;width:324px;height:16px;border:1px solid #A8B6DC;border-radius:2px;background:linear-gradient(#E0E8FC,#BCC8EE 50%,#A4B2DE)"></div>
<div class="a" style="left:194px;top:587px;width:1px;height:6px;background:#F4F6FF"></div>
<div class="a" style="left:196px;top:587px;width:1px;height:6px;background:#F4F6FF"></div>
<div class="a" style="left:198px;top:587px;width:1px;height:6px;background:#F4F6FF"></div>
<div class="a" style="left:200px;top:587px;width:1px;height:6px;background:#F4F6FF"></div>
<div class="a dd" style="left:746px;top:582px;width:16px;height:16px;"></div>
<svg class="a" style="left:751px;top:585px" width="7" height="10"><path d="M1.5 1L5.5 5L1.5 9" stroke="#4C5C80" stroke-width="2.2" fill="none"/></svg>
<div class="a" style="left:5px;top:612px;width:771px;height:1px;background:#8E9EBA"></div>
<div class="a" style="left:775px;top:196px;width:1px;height:417px;background:#8E9EBA"></div>
<div class="a" style="left:784px;top:138px;width:1px;height:478px;background:#48484C"></div>
<div class="a" style="left:791px;top:146px;width:9px;height:1px;background:#8C8C94"></div>
<div class="a" style="left:791px;top:147px;width:9px;height:1px;background:#FFFFFF"></div>
<div class="a" style="left:861px;top:146px;width:211px;height:1px;background:#8C8C94"></div>
<div class="a" style="left:861px;top:147px;width:211px;height:1px;background:#FFFFFF"></div>
<div class="a t" style="left:803.4px;top:138.19px;letter-spacing:0.55px;">Navigator</div>
<div class="a" style="left:791px;top:157px;width:282px;height:41px;background:#fff"></div>
<div class="a" style="left:791px;top:157px;width:282px;height:1px;background:#9C9CA4"></div>
<div class="a" style="left:791px;top:157px;width:1px;height:40px;background:#9C9CA4"></div>
<div class="a hdr" style="left:792px;top:158px;width:261px;height:21px;"></div>
<div class="a hs" style="left:792px;top:176px;width:261px;height:3px;"></div>
<div class="a t" style="left:792.7px;top:161.19px;letter-spacing:0.05px;">Schul-/Dst....</div>
<div class="a t" style="left:879.3px;top:161.19px;letter-spacing:0.13px;">Zweig</div>
<div class="a t" style="left:967.3px;top:161.19px;letter-spacing:-0.04px;">Schule</div>
<svg class="a" style="left:860.7px;top:167px" width="8" height="4"><path d="M0 4.2L4 0L8 4.2Z" fill="#1C2C44"/></svg>
<div class="a t" style="left:870.7px;top:161.19px;letter-spacing:-0.90px;">1</div>
<svg class="a" style="left:948.7px;top:167px" width="8" height="4"><path d="M0 4.2L4 0L8 4.2Z" fill="#1C2C44"/></svg>
<div class="a t" style="left:958.7px;top:161.19px;letter-spacing:-0.90px;">2</div>
<div class="a" style="left:877px;top:161px;width:1px;height:15px;background:#A8A8B0"></div>
<div class="a" style="left:965px;top:161px;width:1px;height:15px;background:#A8A8B0"></div>
<div class="a" style="left:1052px;top:161px;width:1px;height:15px;background:#A8A8B0"></div>
<div class="a" style="left:1054px;top:158px;width:17px;height:21px;border:1.5px solid #1C4080;border-radius:3.5px;background:linear-gradient(#FFFFFF 0%,#F6F6FA 45%,#D4D4DC 100%)"></div>
<svg class="a" style="left:1054px;top:158px" width="17" height="21"><path d="M4.5 5.5H12.5M4.5 7.9H12.5M4.5 5.5V13.3H7M8.5 5.5V9.6M12.5 5.5V9.6" stroke="#000" stroke-width="1.1" fill="none"/><path d="M6.6 10.8H14.4L10.5 15.2Z" fill="#000"/></svg>
<div class="a" style="left:792px;top:179px;width:261px;height:17px;background:#4080FA"></div>
<div class="a" style="left:877px;top:179px;width:1px;height:17px;background:#DDE6FA"></div>
<div class="a" style="left:965px;top:179px;width:1px;height:17px;background:#DDE6FA"></div>
<div class="a t w" style="left:793.6px;top:180.19px;letter-spacing:-0.16px;">04144800</div>
<div class="a t w" style="left:880.7px;top:180.19px;letter-spacing:-0.59px;">GWRHS</div>
<div class="a t w" style="left:968.7px;top:180.19px;letter-spacing:-0.22px;">04144800</div>
<div class="a" style="left:1055px;top:180px;width:16px;height:7px;background:linear-gradient(#EEF2FC,#C8D4F0);border-radius:1px"></div>
<div class="a" style="left:1055px;top:188px;width:16px;height:8px;background:linear-gradient(#EEF2FC,#C8D4F0);border-radius:1px"></div>
<svg class="a" style="left:1058px;top:180.5px" width="10" height="6"><path d="M1 5.4L5 1.4L9 5.4" stroke="#4C607C" stroke-width="1.8" fill="none"/></svg>
<svg class="a" style="left:1058px;top:189px" width="10" height="6"><path d="M1 0.8L5 4.8L9 0.8" stroke="#4C607C" stroke-width="1.8" fill="none"/></svg>
<div class="a" style="left:791px;top:208px;width:281px;height:1px;background:#6E6E72"></div>
<div class="a" style="left:791px;top:203px;width:281px;height:1px;background:#FFFFFF"></div>
<div class="a t" style="left:791.3px;top:216.19px;letter-spacing:0.16px;">Filter:</div>
<div class="a cbd" style="left:833px;top:217px;width:13px;height:13px;"></div>
<div class="a t" style="left:791.3px;top:249.19px;letter-spacing:-0.09px;">Suche:</div>
<div class="a cbd" style="left:833px;top:250px;width:13px;height:13px;"></div>
<div class="a btn" style="left:982px;top:212px;width:90px;height:22px;"></div>
<div class="a t" style="left:999.3px;top:216.19px;letter-spacing:0.27px;">Auswählen</div>
<div class="a btn" style="left:982px;top:245px;width:90px;height:22px;"></div>
<div class="a t" style="left:1000.7px;top:249.19px;letter-spacing:0.05px;">Bearbeiten</div>
<div class="a" style="left:791px;top:273px;width:281px;height:1px;background:#FFFFFF"></div>
<div class="a" style="left:791px;top:278px;width:262px;height:289px;background:#E8E8F2;border-top:1px solid #6E6E72;border-left:1px solid #9C9CA4"></div>
<div class="a hdr" style="left:792px;top:279px;width:261px;height:20px;"></div>
<div class="a hs" style="left:792px;top:298px;width:261px;height:3px;"></div>
<div class="a t" style="left:792.7px;top:283.19px;letter-spacing:-0.51px;">Name</div>
<div class="a t" style="left:879.3px;top:283.19px;letter-spacing:0.32px;">Kennung</div>
<div class="a t" style="left:967.3px;top:283.19px;letter-spacing:0.21px;">Schulnr.</div>
<svg class="a" style="left:866px;top:289px" width="8" height="4"><path d="M0 4.2L4 0L8 4.2Z" fill="#1C2C44"/></svg>
<div class="a" style="left:877px;top:282px;width:1px;height:15px;background:#A8A8B0"></div>
<div class="a" style="left:965px;top:282px;width:1px;height:15px;background:#A8A8B0"></div>
<div class="a" style="left:1052px;top:282px;width:1px;height:15px;background:#A8A8B0"></div>
<div class="a" style="left:1054px;top:280px;width:17px;height:21px;border:1.5px solid #1C4080;border-radius:3.5px;background:linear-gradient(#FFFFFF 0%,#F6F6FA 45%,#D4D4DC 100%)"></div>
<svg class="a" style="left:1054px;top:280px" width="17" height="21"><path d="M4.5 5.5H12.5M4.5 7.9H12.5M4.5 5.5V13.3H7M8.5 5.5V9.6M12.5 5.5V9.6" stroke="#000" stroke-width="1.1" fill="none"/><path d="M6.6 10.8H14.4L10.5 15.2Z" fill="#000"/></svg>
<div class="a" style="left:792px;top:301px;width:261px;height:18px;background:#E8E8F2"></div>
<div class="a t" style="left:880.7px;top:302.19px;letter-spacing:-0.08px;">HaHagm</div>
<div class="a t" style="left:968.7px;top:302.19px;letter-spacing:-0.13px;">04144800 GW...</div>
<div class="a" style="left:877px;top:301px;width:1px;height:18px;background:#F4F5FD"></div>
<div class="a" style="left:965px;top:301px;width:1px;height:18px;background:#F4F5FD"></div>
<div class="a" style="left:792px;top:319px;width:261px;height:18px;background:#CAD8F6"></div>
<div class="a t" style="left:880.7px;top:320.19px;letter-spacing:-0.20px;">ElHeiz</div>
<div class="a t" style="left:968.7px;top:320.19px;letter-spacing:-0.13px;">04144800 GW...</div>
<div class="a" style="left:877px;top:319px;width:1px;height:18px;background:#E4EAFA"></div>
<div class="a" style="left:965px;top:319px;width:1px;height:18px;background:#E4EAFA"></div>
<div class="a" style="left:792px;top:337px;width:261px;height:18px;background:#E8E8F2"></div>
<div class="a t" style="left:793.6px;top:338.19px;letter-spacing:0.12px;">schul</div>
<div class="a t" style="left:880.7px;top:338.19px;letter-spacing:-0.14px;">schul4800WRHS</div>
<div class="a t" style="left:968.7px;top:338.19px;letter-spacing:-0.13px;">04144800 GW...</div>
<div class="a" style="left:877px;top:337px;width:1px;height:18px;background:#F4F5FD"></div>
<div class="a" style="left:965px;top:337px;width:1px;height:18px;background:#F4F5FD"></div>
<div class="a" style="left:792px;top:355px;width:261px;height:18px;background:#4080FA"></div>
<div class="a t w" style="left:793.6px;top:356.19px;letter-spacing:0.29px;">Sonntag, Inge</div>
<div class="a t w" style="left:880.7px;top:356.19px;letter-spacing:0.14px;">InSonn</div>
<div class="a t w" style="left:968.7px;top:356.19px;letter-spacing:-0.13px;">04144800 GW...</div>
<div class="a" style="left:877px;top:355px;width:1px;height:18px;background:#F4F5FD"></div>
<div class="a" style="left:965px;top:355px;width:1px;height:18px;background:#F4F5FD"></div>
<div class="a" style="left:792.5px;top:304px;width:5px;height:5px;background:#E4C8C8"></div>
<div class="a" style="left:797.5px;top:304px;width:5px;height:5px;background:#D8D0D8"></div>
<div class="a" style="left:802.5px;top:304px;width:5px;height:5px;background:#D4D4DC"></div>
<div class="a" style="left:807.5px;top:304px;width:5px;height:5px;background:#E0DCE4"></div>
<div class="a" style="left:812.5px;top:304px;width:5px;height:5px;background:#D4D8DC"></div>
<div class="a" style="left:817.5px;top:304px;width:5px;height:5px;background:#D8D0D8"></div>
<div class="a" style="left:822.5px;top:304px;width:5px;height:5px;background:#DCDCE0"></div>
<div class="a" style="left:827.5px;top:304px;width:5px;height:5px;background:#D8D8E0"></div>
<div class="a" style="left:832.5px;top:304px;width:5px;height:5px;background:#D0C8D4"></div>
<div class="a" style="left:837.5px;top:304px;width:5px;height:5px;background:#DCD4D8"></div>
<div class="a" style="left:792.5px;top:309px;width:5px;height:5px;background:#B49CA0"></div>
<div class="a" style="left:797.5px;top:309px;width:5px;height:5px;background:#9C94A4"></div>
<div class="a" style="left:802.5px;top:309px;width:5px;height:5px;background:#909CA0"></div>
<div class="a" style="left:807.5px;top:309px;width:5px;height:5px;background:#8880A4"></div>
<div class="a" style="left:812.5px;top:309px;width:5px;height:5px;background:#9CA094"></div>
<div class="a" style="left:817.5px;top:309px;width:5px;height:5px;background:#8478A4"></div>
<div class="a" style="left:822.5px;top:309px;width:5px;height:5px;background:#A49498"></div>
<div class="a" style="left:827.5px;top:309px;width:5px;height:5px;background:#909C98"></div>
<div class="a" style="left:832.5px;top:309px;width:5px;height:5px;background:#9C84A0"></div>
<div class="a" style="left:837.5px;top:309px;width:5px;height:5px;background:#A0A8BC"></div>
<div class="a" style="left:802.5px;top:314px;width:5px;height:3px;background:#D8D0D4"></div>
<div class="a" style="left:807.5px;top:314px;width:5px;height:3px;background:#B4B8C8"></div>
<div class="a" style="left:842px;top:309px;width:2px;height:5px;background:#B07C70"></div>
<div class="a t" style="left:843px;top:302.19px;letter-spacing:-0.11px;">, Ha...</div>
<div class="a" style="left:797px;top:322px;width:5px;height:5px;background:#D0D4F0"></div>
<div class="a" style="left:802px;top:322px;width:5px;height:5px;background:#C0C8EC"></div>
<div class="a" style="left:807px;top:322px;width:5px;height:5px;background:#C8D0F0"></div>
<div class="a" style="left:812px;top:322px;width:5px;height:5px;background:#C4CCF0"></div>
<div class="a" style="left:817px;top:322px;width:5px;height:5px;background:#C0C8EC"></div>
<div class="a" style="left:822px;top:322px;width:5px;height:5px;background:#C8D0F0"></div>
<div class="a" style="left:827px;top:322px;width:5px;height:5px;background:#C4C8EC"></div>
<div class="a" style="left:832px;top:322px;width:5px;height:5px;background:#C8D0F0"></div>
<div class="a" style="left:837px;top:322px;width:5px;height:5px;background:#C0C8EC"></div>
<div class="a" style="left:842px;top:322px;width:5px;height:5px;background:#C8D4F4"></div>
<div class="a" style="left:797px;top:327px;width:5px;height:5px;background:#9088A8"></div>
<div class="a" style="left:802px;top:327px;width:5px;height:5px;background:#9098B0"></div>
<div class="a" style="left:807px;top:327px;width:5px;height:5px;background:#8C88A8"></div>
<div class="a" style="left:812px;top:327px;width:5px;height:5px;background:#9490B0"></div>
<div class="a" style="left:817px;top:327px;width:5px;height:5px;background:#8C90AC"></div>
<div class="a" style="left:822px;top:327px;width:5px;height:5px;background:#98A0A8"></div>
<div class="a" style="left:827px;top:327px;width:5px;height:5px;background:#8C94B4"></div>
<div class="a" style="left:832px;top:327px;width:5px;height:5px;background:#A0A4C0"></div>
<div class="a" style="left:837px;top:327px;width:5px;height:5px;background:#8C84A8"></div>
<div class="a" style="left:842px;top:327px;width:5px;height:5px;background:#B0B8DC"></div>
<div class="a" style="left:797px;top:332px;width:5px;height:4px;background:#B8BCDC"></div>
<div class="a" style="left:802px;top:332px;width:5px;height:4px;background:#B0B4D4"></div>
<div class="a" style="left:807px;top:332px;width:5px;height:4px;background:#B4BCE0"></div>
<div class="a" style="left:812px;top:332px;width:5px;height:4px;background:#B8B8DC"></div>
<div class="a" style="left:817px;top:332px;width:5px;height:4px;background:#B4BCDC"></div>
<div class="a" style="left:822px;top:332px;width:5px;height:4px;background:#BCC0E0"></div>
<div class="a" style="left:827px;top:332px;width:5px;height:4px;background:#B4B8DC"></div>
<div class="a" style="left:832px;top:332px;width:5px;height:4px;background:#B8C0E4"></div>
<div class="a" style="left:837px;top:332px;width:5px;height:4px;background:#B4B8D8"></div>
<div class="a" style="left:842px;top:332px;width:5px;height:4px;background:#B4BCDC"></div>
<div class="a" style="left:794px;top:324px;width:1.5px;height:8px;background:#2C2C34"></div>
<div class="a t" style="left:850.7px;top:320.19px;letter-spacing:-0.02px;">Elfr...</div>
<div class="a" style="left:1054px;top:301px;width:18px;height:266px;background:#fff"></div>
<div class="a" style="left:1055px;top:301px;width:16px;height:16px;background:#F2F2F6"></div>
<svg class="a" style="left:1058px;top:306px" width="10" height="7"><path d="M1 5.5L5 1.5L9 5.5" stroke="#D4D4DA" stroke-width="1.6" fill="none"/></svg>
<div class="a" style="left:1055px;top:549px;width:16px;height:16px;background:#F2F2F6"></div>
<svg class="a" style="left:1058px;top:555px" width="10" height="7"><path d="M1 1.5L5 5.5L9 1.5" stroke="#D4D4DA" stroke-width="1.6" fill="none"/></svg>
<div class="a t" style="left:908px;top:568.19px;letter-spacing:0.10px;">Anzahl: 4</div>
<div class="a" style="left:791px;top:586px;width:281px;height:1px;background:#FFFFFF"></div>
<div class="a" style="left:791px;top:609px;width:281px;height:1px;background:#DCDDE8"></div>
<svg class="a" style="left:850.5px;top:590px" width="16" height="16"><rect x="2.5" y="3.5" width="13" height="12" fill="#fff" stroke="#6C94DC" stroke-width="1"/><path d="M2.5 6.5H15.5M2.5 9.5H15.5M2.5 12.5H15.5M6.5 3.5V15.5M10.5 6.5V15.5" stroke="#88ACE4" stroke-width="0.9" fill="none"/><rect x="6.8" y="4" width="8.4" height="2.2" fill="#8CC46C"/><rect x="0.5" y="0.5" width="5.6" height="7.6" rx="1.4" fill="#E4E4E4" stroke="#8C8C8C" stroke-width="1"/><path d="M3.3 2V6.4" stroke="#A4A4A4" stroke-width="1"/></svg>
<svg class="a" style="left:873.5px;top:592.3px" width="11" height="12"><rect x="0.3" y="0.3" width="2.4" height="11.4" fill="url(#gb)" stroke="#2C5CC8" stroke-width="0.5"/><path d="M9.8 0.5V11.5L3.2 6Z" fill="url(#gb)" stroke="#2C5CC8" stroke-width="0.6"/></svg>
<svg class="a" style="left:892.5px;top:592.3px" width="15" height="12"><path d="M7 0.5V11.5L0.5 6Z" fill="url(#gb)" stroke="#2C5CC8" stroke-width="0.6"/><path d="M14 0.5V11.5L7.5 6Z" fill="url(#gb)" stroke="#2C5CC8" stroke-width="0.6"/></svg>
<svg class="a" style="left:916.5px;top:592.3px" width="9" height="12"><path d="M7.4 0.5V11.5L0.6 6Z" fill="url(#gb)" stroke="#2C5CC8" stroke-width="0.6"/></svg>
<svg class="a" style="left:937.5px;top:592.3px" width="9" height="12"><path d="M0.4 0.5V11.5L7.2 6Z" fill="url(#gg)"/></svg>
<svg class="a" style="left:955.5px;top:592.3px" width="15" height="12"><path d="M0.6 0.5V11.5L7.1 6Z" fill="url(#gg)"/><path d="M7.6 0.5V11.5L14.1 6Z" fill="url(#gg)"/></svg>
<svg class="a" style="left:978.5px;top:592.3px" width="11" height="12"><path d="M0.2 0.5V11.5L6.8 6Z" fill="url(#gg)"/><rect x="6.8" y="0.3" width="3.3" height="11.4" fill="url(#gg)"/></svg>
<svg class="a" style="left:997.5px;top:590px" width="16" height="16"><path d="M1.2 7.2C1.6 3.6 6 2 9.6 3.6L10.6 1L14.6 5.8L8.6 7.4L9.2 5.6C6.6 4.8 4.4 5.6 3.8 7.6Z" fill="url(#gn)" stroke="#4C9C44" stroke-width="0.5"/><path d="M14.8 8.8C14.4 12.4 10 14 6.4 12.4L5.4 15L1.4 10.2L7.4 8.6L6.8 10.4C9.4 11.2 11.6 10.4 12.2 8.4Z" fill="url(#gn)" stroke="#4C9C44" stroke-width="0.5"/></svg>
<div class="a t" style="left:4px;top:623.19px;letter-spacing:0.40px;">Administrator</div>
<div class="a" style="left:77px;top:622px;width:2px;height:18px;background:#8E9EBA"></div>
<div class="a t" style="left:81px;top:623.19px;letter-spacing:-0.12px;">04144800</div>
<div class="a" style="left:869px;top:622px;width:2px;height:18px;background:#8E9EBA"></div>
<div class="a t" style="left:875.3px;top:623.19px;letter-spacing:0.12px;">Aktuelles Schuljahr: 2018/19</div>
<div class="a" style="left:1022px;top:622px;width:2px;height:18px;background:#8E9EBA"></div>
<div class="a t" style="left:1027px;top:623.19px;letter-spacing:-0.21px;">27.08.2018</div>
</body></html>
